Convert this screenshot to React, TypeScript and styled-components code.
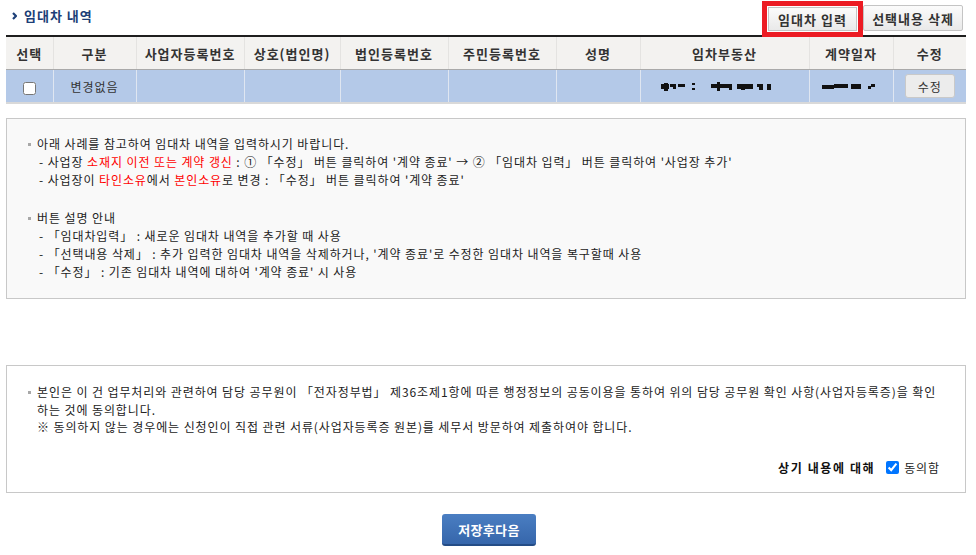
import React from 'react'
import styled, { createGlobalStyle } from 'styled-components'

const GlobalStyle = createGlobalStyle`
    body {
        margin: 0;
        background: #fff;
        font-family: "Noto Sans CJK KR", "Noto Sans", sans-serif;
        font-size: 12px;
        letter-spacing: 0.9px;
        color: #222;
    }
`

const Page = styled.div`
    width: 976px;
    box-sizing: border-box;
    padding: 0 10px 0 6px;
`

const TopBar = styled.div`
    display: flex;
    justify-content: space-between;
    align-items: flex-start;
    height: 35px;
`

const Title = styled.h2`
    display: flex;
    align-items: center;
    gap: 7px;
    margin: 7px 0 0 6px;
    font-size: 13px;
    font-weight: bold;
    letter-spacing: 1px;
    color: #1d3f78;
    line-height: 18px;
`

const Actions = styled.div`
    display: flex;
    align-items: flex-end;
    gap: 6px;
    margin: 5px 3px 0 0;
    height: 26px;
`

const ActionButton = styled.button<{ $highlight?: boolean }>`
    width: ${p => (p.$highlight ? '89px' : '100px')};
    height: ${p => (p.$highlight ? '24px' : '26px')};
    padding: 0;
    border: 1px solid #c4c4c4;
    border-radius: ${p => (p.$highlight ? '0' : '2px')};
    background: linear-gradient(#fbfbfb, #e9e9e9);
    font-family: inherit;
    font-size: 13px;
    font-weight: bold;
    letter-spacing: 1px;
    color: #333;
    cursor: pointer;
    ${p => p.$highlight && `
        outline: 5px solid #ec1c24;
        outline-offset: 1px;
        position: relative;
        z-index: 2;
    `}
`

const Table = styled.table`
    width: 960px;
    border-collapse: collapse;
    table-layout: fixed;
    border-top: 2px solid #1e1e1e;
    border-bottom: 2px solid #d9d9d9;
`

const Th = styled.th`
    height: 32px;
    padding: 0;
    background: #f3f2f0;
    border-right: 1px solid #e4e3e1;
    border-bottom: 1px solid #a9a9a9;
    font-size: 13px;
    font-weight: bold;
    letter-spacing: 1px;
    color: #333;
    text-align: center;
    &:last-child { border-right: none; }
`

const Td = styled.td`
    height: 32px;
    padding: 0;
    background: #b4c9e8;
    border-right: 1px solid #dfe6f1;
    text-align: center;
    font-size: 12px;
    color: #333;
    &:last-child { border-right: none; }
`

const RowCheck = styled.input`
    margin: 0;
    width: 13px;
    height: 13px;
    vertical-align: middle;
`

const EditButton = styled.button`
    width: 50px;
    height: 24px;
    padding: 0;
    border: 1px solid #c9c9c9;
    border-radius: 3px;
    background: #ececec;
    font-family: inherit;
    font-size: 12px;
    letter-spacing: 0.9px;
    color: #333;
    vertical-align: middle;
`

const Masked = styled.svg`
    display: block;
    margin: 0 auto;
`

const InfoBox = styled.div<{ $plain?: boolean }>`
    margin-top: ${p => (p.$plain ? '66px' : '14px')};
    padding: ${p => (p.$plain ? '17px 25px 16px 21px' : '16px 22px 17px 21px')};
    border: 1px solid #c8c8c8;
    background: ${p => (p.$plain ? '#fff' : '#f9f9f9')};
    line-height: ${p => (p.$plain ? '17.5px' : '18px')};
    font-size: 12px;
    color: #222;
`

const Bullet = styled.p<{ $gap?: boolean }>`
    position: relative;
    margin: ${p => (p.$gap ? '20px' : '0')} 0 0;
    padding-left: 9px;
    &::before {
        content: '';
        position: absolute;
        left: 0;
        top: 8px;
        width: 3px;
        height: 3px;
        background: #a8a8a8;
    }
`

const Sub = styled.p<{ $indent?: number }>`
    margin: 0;
    padding-left: ${p => p.$indent ?? 11}px;
`

const Red = styled.span`
    color: #f00;
`

const AgreeRow = styled.div`
    display: flex;
    justify-content: flex-end;
    align-items: center;
    margin-top: 23px;
`

const AgreeLabel = styled.strong`
    font-size: 12px;
    font-weight: bold;
    color: #111;
    margin-right: 11px;
    letter-spacing: 1.6px;
`

const AgreeCheck = styled.input`
    margin: 0 5px 0 0;
    width: 13px;
    height: 13px;
`

const Footer = styled.div`
    display: flex;
    justify-content: center;
    padding: 21px 0 0 6px;
`

const SaveButton = styled.button`
    width: 94px;
    height: 32px;
    border: none;
    border-bottom: 2px solid #244c86;
    border-radius: 3px;
    background: linear-gradient(#4a7ec2, #3666ab);
    font-family: inherit;
    font-size: 13px;
    font-weight: bold;
    letter-spacing: 0.3px;
    color: #fff;
`

const columns = [
    { label: '선택', width: 47 },
    { label: '구분', width: 83 },
    { label: '사업자등록번호', width: 108 },
    { label: '상호(법인명)', width: 96 },
    { label: '법인등록번호', width: 108 },
    { label: '주민등록번호', width: 108 },
    { label: '성명', width: 84 },
    { label: '임차부동산', width: 169 },
    { label: '계약일자', width: 84 },
    { label: '수정', width: 73 },
]

const Arrow = () => (
    <svg width="5" height="8" viewBox="0 0 5 8">
        <path d="M1 1 L4 4 L1 7" fill="none" stroke="#1d3f78" strokeWidth="2.2" />
    </svg>
)

const AddressMask = () => (
    <Masked width="128" height="10" viewBox="0 0 128 10">
        <g fill="#111">
            <rect x="0" y="3" width="8" height="5" />
            <rect x="3" y="2" width="4" height="8" />
            <rect x="9" y="3" width="6" height="3" />
            <rect x="12" y="6" width="3" height="2" />
            <rect x="17" y="3" width="7" height="3" />
            <rect x="31" y="2" width="3" height="2" />
            <rect x="31" y="7" width="3" height="2" />
            <rect x="50" y="3" width="18" height="4" />
            <rect x="56" y="1" width="3" height="9" />
            <rect x="68" y="3" width="3" height="6" />
            <rect x="76" y="3" width="16" height="5" />
            <rect x="80" y="6" width="4" height="3" />
            <rect x="96" y="3" width="6" height="3" />
            <rect x="98" y="6" width="4" height="3" />
            <rect x="106" y="3" width="4" height="6" />
        </g>
    </Masked>
)

const DateMask = () => (
    <Masked width="58" height="10" viewBox="0 0 58 10">
        <g fill="#111">
            <rect x="0" y="4" width="12" height="4" />
            <rect x="12" y="3" width="14" height="4" />
            <rect x="29" y="3" width="10" height="5" />
            <rect x="46" y="5" width="3" height="3" />
            <rect x="49" y="3" width="4" height="3" />
        </g>
    </Masked>
)

const App = () => {
    return (
        <Page>
            <GlobalStyle />
            <TopBar>
                <Title>
                    <Arrow />
                    임대차 내역
                </Title>
                <Actions>
                    <ActionButton $highlight>임대차 입력</ActionButton>
                    <ActionButton>선택내용 삭제</ActionButton>
                </Actions>
            </TopBar>

            <Table>
                <colgroup>
                    {columns.map(c => (
                        <col key={c.label} style={{ width: c.width }} />
                    ))}
                </colgroup>
                <thead>
                    <tr>
                        {columns.map(c => (
                            <Th key={c.label}>{c.label}</Th>
                        ))}
                    </tr>
                </thead>
                <tbody>
                    <tr>
                        <Td><RowCheck type="checkbox" /></Td>
                        <Td>변경없음</Td>
                        <Td />
                        <Td />
                        <Td />
                        <Td />
                        <Td />
                        <Td><AddressMask /></Td>
                        <Td><DateMask /></Td>
                        <Td><EditButton>수정</EditButton></Td>
                    </tr>
                </tbody>
            </Table>

            <InfoBox>
                <Bullet>아래 사례를 참고하여 임대차 내역을 입력하시기 바랍니다.</Bullet>
                <Sub>
                    - 사업장 <Red>소재지 이전 또는 계약 갱신</Red> : ① 「수정」 버튼 클릭하여 '계약 종료' → ② 「임대차 입력」 버튼 클릭하여 '사업장 추가'
                </Sub>
                <Sub>
                    - 사업장이 <Red>타인소유</Red>에서 <Red>본인소유</Red>로 변경 : 「수정」 버튼 클릭하여 '계약 종료'
                </Sub>
                <Bullet $gap>버튼 설명 안내</Bullet>
                <Sub>- 「임대차입력」 : 새로운 임대차 내역을 추가할 때 사용</Sub>
                <Sub>- 「선택내용 삭제」 : 추가 입력한 임대차 내역을 삭제하거나, '계약 종료'로 수정한 임대차 내역을 복구할때 사용</Sub>
                <Sub>- 「수정」 : 기존 임대차 내역에 대하여 '계약 종료' 시 사용</Sub>
            </InfoBox>

            <InfoBox $plain>
                <Bullet>
                    본인은 이 건 업무처리와 관련하여 담당 공무원이 「전자정부법」 제36조제1항에 따른 행정정보의 공동이용을 통하여 위의 담당 공무원 확인 사항(사업자등록증)을 확인
                    <br />
                    하는 것에 동의합니다.
                </Bullet>
                <Sub $indent={9}>※ 동의하지 않는 경우에는 신청인이 직접 관련 서류(사업자등록증 원본)를 세무서 방문하여 제출하여야 합니다.</Sub>
                <AgreeRow>
                    <AgreeLabel>상기 내용에 대해</AgreeLabel>
                    <AgreeCheck type="checkbox" defaultChecked />
                    <span>동의함</span>
                </AgreeRow>
            </InfoBox>

            <Footer>
                <SaveButton>저장후다음</SaveButton>
            </Footer>
        </Page>
    )
}

export default App
